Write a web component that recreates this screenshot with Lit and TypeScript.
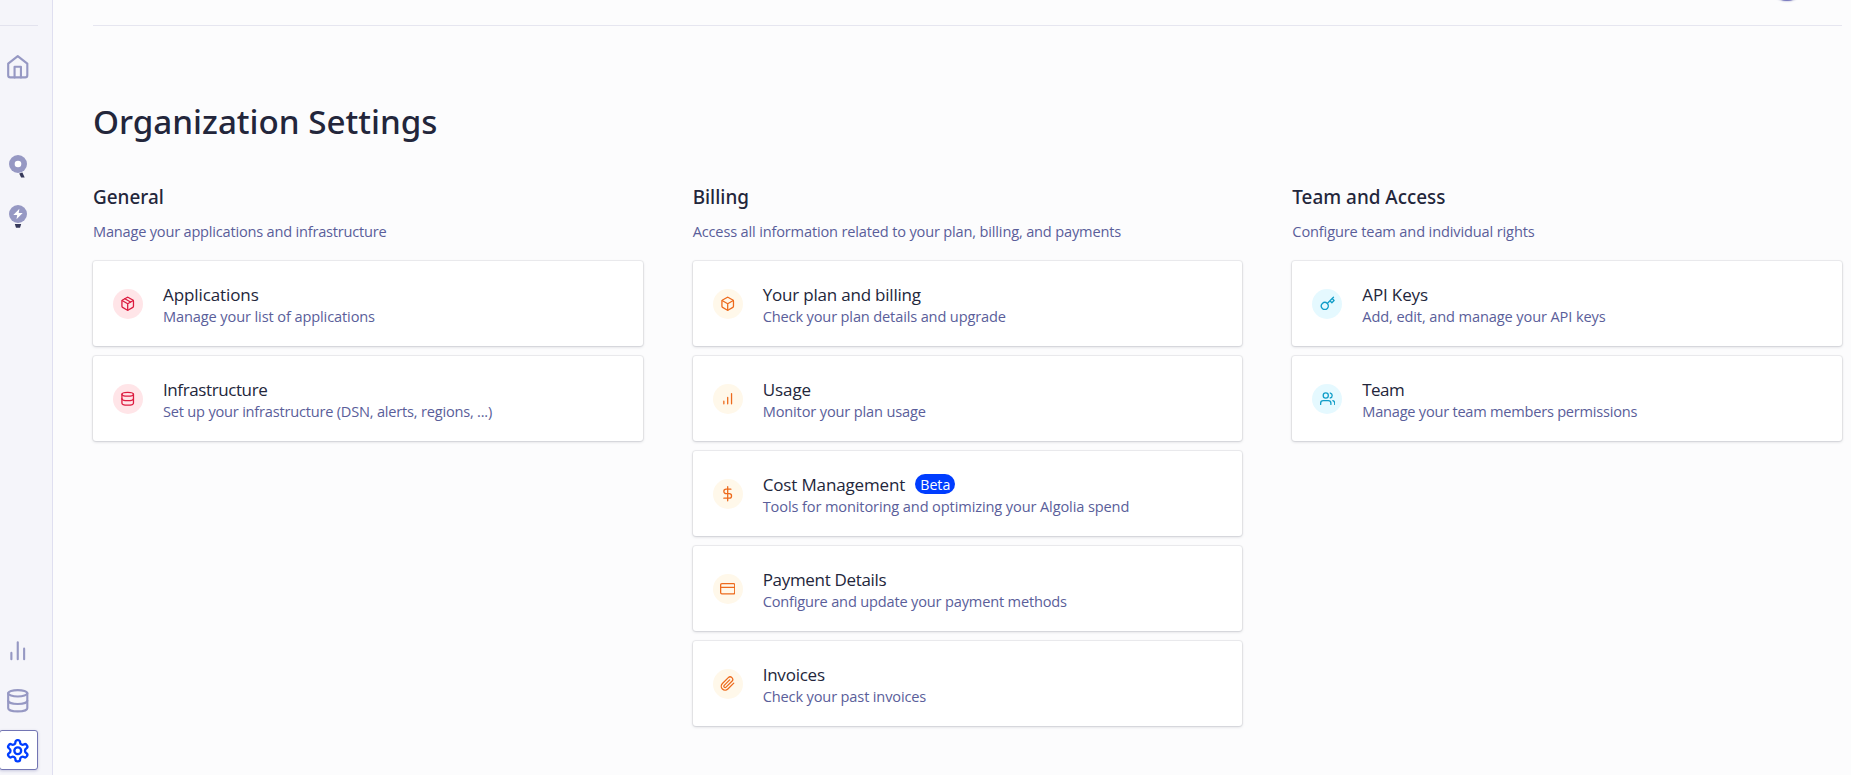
import { LitElement, html, css, svg, nothing, TemplateResult } from "lit";
import { customElement, property } from "lit/decorators.js";

const icons: Record<string, TemplateResult> = {
  home: svg`<path d="M3 9l9-7 9 7v11a2 2 0 0 1-2 2H5a2 2 0 0 1-2-2z"/><path d="M9 22V12h6v10"/>`,
  bars: svg`<path d="M18 20V10M12 20V4M6 20v-6"/>`,
  rising: svg`<path d="M12 20V10M18 20V4M6 20v-4"/>`,
  database: svg`<ellipse cx="12" cy="5" rx="9" ry="3"/><path d="M21 12c0 1.66-4 3-9 3s-9-1.34-9-3"/><path d="M3 5v14c0 1.66 4 3 9 3s9-1.34 9-3V5"/>`,
  settings: svg`<path d="M12.22 2h-.44a2 2 0 0 0-2 2v.18a2 2 0 0 1-1 1.73l-.43.25a2 2 0 0 1-2 0l-.15-.08a2 2 0 0 0-2.73.73l-.22.38a2 2 0 0 0 .73 2.73l.15.1a2 2 0 0 1 1 1.72v.51a2 2 0 0 1-1 1.74l-.15.09a2 2 0 0 0-.73 2.73l.22.38a2 2 0 0 0 2.73.73l.15-.08a2 2 0 0 1 2 0l.43.25a2 2 0 0 1 1 1.73V20a2 2 0 0 0 2 2h.44a2 2 0 0 0 2-2v-.18a2 2 0 0 1 1-1.73l.43-.25a2 2 0 0 1 2 0l.15.08a2 2 0 0 0 2.73-.73l.22-.39a2 2 0 0 0-.73-2.73l-.15-.08a2 2 0 0 1-1-1.74v-.5a2 2 0 0 1 1-1.74l.15-.09a2 2 0 0 0 .73-2.73l-.22-.38a2 2 0 0 0-2.73-.73l-.15.08a2 2 0 0 1-2 0l-.43-.25a2 2 0 0 1-1-1.73V4a2 2 0 0 0-2-2z"/><circle cx="12" cy="12" r="3.2"/>`,
  package: svg`<path d="M16.5 9.4l-9-5.19"/><path d="M21 16V8a2 2 0 0 0-1-1.73l-7-4a2 2 0 0 0-2 0l-7 4A2 2 0 0 0 3 8v8a2 2 0 0 0 1 1.73l7 4a2 2 0 0 0 2 0l7-4A2 2 0 0 0 21 16z"/><path d="M3.27 6.96L12 12.01l8.73-5.05M12 22.08V12"/>`,
  box: svg`<path d="M21 16V8a2 2 0 0 0-1-1.73l-7-4a2 2 0 0 0-2 0l-7 4A2 2 0 0 0 3 8v8a2 2 0 0 0 1 1.73l7 4a2 2 0 0 0 2 0l7-4A2 2 0 0 0 21 16z"/><path d="M3.27 6.96L12 12.01l8.73-5.05M12 22.08V12"/>`,
  dollar: svg`<path d="M12 1v22M17 5H9.5a3.5 3.5 0 0 0 0 7h5a3.5 3.5 0 0 1 0 7H6"/>`,
  card: svg`<rect x="1" y="4" width="22" height="16" rx="2"/><path d="M1 10h22"/>`,
  clip: svg`<path d="M21.44 11.05l-9.19 9.19a6 6 0 0 1-8.49-8.49l9.19-9.19a4 4 0 0 1 5.66 5.66l-9.2 9.19a2 2 0 0 1-2.83-2.83l8.49-8.48"/>`,
  key: svg`<path d="M21 2l-2 2m-7.61 7.61a5.5 5.5 0 1 1-7.778 7.778 5.5 5.5 0 0 1 7.777-7.777zm0 0L15.5 7.5m0 0l3 3L22 7l-3-3m-3.5 3.5L19 4"/>`,
  users: svg`<path d="M17 21v-2a4 4 0 0 0-4-4H5a4 4 0 0 0-4 4v2"/><circle cx="9" cy="7" r="4"/><path d="M23 21v-2a4 4 0 0 0-3-3.87M16 3.13a4 4 0 0 1 0 7.75"/>`,
};

interface Entry { icon: string; title: string; text: string; tracking: number; textTracking?: number; badge?: string }
interface Section { title: string; text: string; tone: string; textTracking?: number; entries: Entry[] }

const sections: Section[] = [
  {
    title: "General", text: "Manage your applications and infrastructure", tone: "red", textTracking: -0.21,
    entries: [
      { icon: "package", title: "Applications", text: "Manage your list of applications", tracking: -0.1, textTracking: -0.12 },
      { icon: "database", title: "Infrastructure", text: "Set up your infrastructure (DSN, alerts, regions, ...)", tracking: -0.4, textTracking: -0.21 },
    ],
  },
  {
    title: "Billing", text: "Access all information related to your plan, billing, and payments", tone: "orange",
    entries: [
      { icon: "box", title: "Your plan and billing", text: "Check your plan details and upgrade", tracking: -0.2 },
      { icon: "rising", title: "Usage", text: "Monitor your plan usage", tracking: -0.06 },
      { icon: "dollar", title: "Cost Management", text: "Tools for monitoring and optimizing your Algolia spend", tracking: -0.14, textTracking: -0.12, badge: "Beta" },
      { icon: "card", title: "Payment Details", text: "Configure and update your payment methods", tracking: -0.32, textTracking: -0.18 },
      { icon: "clip", title: "Invoices", text: "Check your past invoices", tracking: -0.23 },
    ],
  },
  {
    title: "Team and Access", text: "Configure team and individual rights", tone: "cyan", textTracking: -0.14,
    entries: [
      { icon: "key", title: "API Keys", text: "Add, edit, and manage your API keys", tracking: -0.15, textTracking: -0.12 },
      { icon: "users", title: "Team", text: "Manage your team members permissions", tracking: -0.6, textTracking: -0.24 },
    ],
  },
];

@customElement("line-icon")
class LineIcon extends LitElement {
  @property() name = "home";
  static styles = css`
    :host { display: block; }
    .glyph { display: block; width: 100%; height: 100%; fill: none; stroke: currentColor; stroke-width: var(--stroke, 2); stroke-linecap: round; stroke-linejoin: round; }
  `;
  render() {
    return html`<svg class="glyph" viewBox="0 0 24 24">${icons[this.name]}</svg>`;
  }
}

@customElement("side-nav")
class SideNav extends LitElement {
  static styles = css`
    :host { display: flex; flex-direction: column; box-sizing: border-box; width: 53px; height: 775px; background: #f5f5fa; border-right: 1px solid #dfdff0; color: #9698c3; }
    .rule { width: 38px; height: 25px; border-bottom: 1px solid #e3e3ee; }
    .item { display: flex; align-items: center; justify-content: center; box-sizing: border-box; width: 37px; height: 40px; margin-left: -1px; flex: none; }
    .icon { width: 25.5px; height: 25.5px; --stroke: 2; }
    .home { margin-top: 21px; }
    .products { margin-top: 60px; display: flex; flex-direction: column; gap: 10px; }
    .product { display: block; width: 24px; height: 30px; }
    .bottom { margin-top: auto; display: flex; flex-direction: column; gap: 10px; padding-bottom: 5px; }
    .lowered { padding-top: 1px; }
    .active { width: 39px; padding-top: 1px; color: #003dff; background: #fff; border: 1px solid #7375b3; border-radius: 3px; box-shadow: 0 1px 3px rgba(90, 94, 154, .3); }
    .active .icon { margin-left: -2px; --stroke: 2.2; }
  `;
  render() {
    return html`
      <div class="rule"></div>
      <div class="item home"><line-icon class="icon" name="home"></line-icon></div>
      <div class="products">
        <div class="item">
          <svg class="product" viewBox="0 0 24 30">
            <circle cx="12" cy="12" r="9" fill="#9698c3"/><circle cx="12" cy="12" r="3.3" fill="#fff"/>
            <path d="M13.2 21.6l3.2-1 2.3 5h-3.6z" fill="#36395a"/>
          </svg>
        </div>
        <div class="item">
          <svg class="product" viewBox="0 0 24 30">
            <circle cx="12" cy="12" r="9" fill="#9698c3"/>
            <path d="M13.4 6.8L7.3 13h3.9l-.7 4.3 6.2-6.2h-4z" fill="#fff"/>
            <path d="M8.8 22h6.4l-1.2 3.8h-4z" fill="#36395a"/>
          </svg>
        </div>
      </div>
      <div class="bottom">
        <div class="item lowered"><line-icon class="icon" name="bars"></line-icon></div>
        <div class="item lowered"><line-icon class="icon" name="database"></line-icon></div>
        <div class="item active"><line-icon class="icon" name="settings"></line-icon></div>
      </div>`;
  }
}

@customElement("settings-card")
class SettingsCard extends LitElement {
  @property({ attribute: false }) entry!: Entry;
  @property() tone = "red";
  static styles = css`
    :host { display: flex; align-items: center; gap: 20px; box-sizing: border-box; height: 85px; padding: 1px 20px 0; background: #fff; border-radius: 3px; box-shadow: 0 0 0 1px rgba(35, 38, 59, .06), 0 1px 3px rgba(35, 38, 59, .18); }
    .disc { display: grid; place-items: center; width: 30px; height: 30px; border-radius: 50%; flex: none; }
    .red { color: #dc1b3f; background: #ffe5e8; }
    .orange { color: #ed6a1c; background: #fff8ea; }
    .cyan { color: #119dc8; background: #e5f9ff; }
    .icon { width: 15.4px; height: 15.4px; }
    .heading { display: flex; align-items: center; gap: 10px; height: 24px; font-size: 17px; line-height: 24px; color: #23263b; }
    .label { padding-top: 1px; }
    .text { font-size: 14.6px; line-height: 20px; color: #5a5e9a; }
    .badge { box-sizing: border-box; height: 20px; padding: 0 5px; border-radius: 10px; background: #003dff; color: #fff; font-size: 14.2px; line-height: 21px; }
  `;
  render() {
    const e = this.entry;
    return html`
      <div class="disc ${this.tone}"><line-icon class="icon" name=${e.icon}></line-icon></div>
      <div>
        <div class="heading">
          <span class="label" style="letter-spacing:${e.tracking}px">${e.title}</span>
          ${e.badge ? html`<span class="badge">${e.badge}</span>` : nothing}
        </div>
        <div class="text" style="letter-spacing:${e.textTracking ?? -0.15}px">${e.text}</div>
      </div>`;
  }
}

@customElement("app-root")
class AppRoot extends LitElement {
  static styles = css`
    :host { display: flex; height: 775px; overflow: hidden; background: #fcfcfd; color: #23263b; font-family: "Open Sans", "Noto Sans", sans-serif; font-weight: 400; }
    .main { flex: 1; min-width: 0; padding: 0 9px 0 40px; }
    .header { display: flex; justify-content: flex-end; box-sizing: border-box; height: 26px; padding-right: 37px; border-bottom: 1px solid #e6e6f0; }
    .avatar { width: 36px; height: 36px; margin-top: -35px; border-radius: 50%; background: #7b7cc0; box-shadow: 0 0 2px #9698c3; }
    .page-title { margin: 76px 0 41px; font-family: "Noto Sans", sans-serif; font-size: 33.2px; line-height: 40px; font-weight: 500; }
    .columns { display: grid; grid-template-columns: repeat(3, 1fr); gap: 50px; }
    .section-title { margin: 0 0 10px; font-family: "Noto Sans", sans-serif; font-size: 18.9px; line-height: 28px; font-weight: 500; }
    .section-text { margin: 0 0 20px; font-size: 14.6px; line-height: 20px; color: #5a5e9a; }
    .cards { display: flex; flex-direction: column; gap: 10px; }
  `;
  render() {
    return html`
      <side-nav></side-nav>
      <div class="main">
        <div class="header"><div class="avatar"></div></div>
        <h1 class="page-title">Organization Settings</h1>
        <div class="columns">
          ${sections.map(s => html`
            <section>
              <h2 class="section-title">${s.title}</h2>
              <p class="section-text" style="letter-spacing:${s.textTracking ?? -0.17}px">${s.text}</p>
              <div class="cards">
                ${s.entries.map(e => html`<settings-card .entry=${e} tone=${s.tone}></settings-card>`)}
              </div>
            </section>`)}
        </div>
      </div>`;
  }
}
